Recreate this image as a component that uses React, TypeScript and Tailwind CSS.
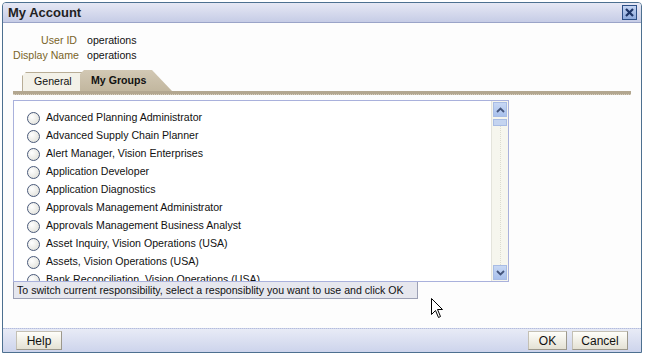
import { Fragment } from 'react';

const groups = [
  'Advanced Planning Administrator',
  'Advanced Supply Chain Planner',
  'Alert Manager, Vision Enterprises',
  'Application Developer',
  'Application Diagnostics',
  'Approvals Management Administrator',
  'Approvals Management Business Analyst',
  'Asset Inquiry, Vision Operations (USA)',
  'Assets, Vision Operations (USA)',
  'Bank Reconciliation, Vision Operations (USA)',
];

function Radio() {
  return (
    <span className="size-[13px] shrink-0 rounded-full border border-[#4a5a7a] bg-[radial-gradient(circle_at_35%_35%,#ffffff,#dcdcd4)]" />
  );
}

function Button({ label, className }: { label: string; className: string }) {
  return (
    <button
      className={`h-[19px] border border-[#c4c0b4] border-b-[#9c988c] border-r-[#9c988c] bg-gradient-to-b from-[#fefefa] to-[#e4e1d4] text-[12px] text-[#111] leading-none ${className}`}
    >
      {label}
    </button>
  );
}

function Cursor() {
  return (
    <svg className="absolute left-[431px] top-[298px]" width="13" height="22" viewBox="0 0 13 22">
      <path
        d="M0.5 0.5 L0.5 16.5 L4.5 12.5 L7.5 19.5 L9.5 18.5 L6.5 11.5 L11.5 11.5 Z"
        fill="#fff"
        stroke="#000"
        strokeWidth="1"
      />
    </svg>
  );
}

export default function App() {
  return (
    <div className="relative h-[356px] w-[645px] overflow-hidden whitespace-nowrap bg-white font-['Liberation_Sans',Arial,sans-serif]">
      <div className="ml-[2px] mt-[2px] flex h-[351px] w-[640px] flex-col rounded-t-[4px] border border-[#4d7090]">
        {/* title */}
        <div className="flex h-[20px] items-center justify-between rounded-t-[3px] border-b border-[#9aa4c8] bg-gradient-to-b from-[#e6e8f4] to-[#c6cce6] pl-[5px] pr-[4px]">
          <span className="text-[13px] font-bold text-[#222]">My Account</span>
          <span className="flex size-[15px] items-center justify-center border border-[#2c4f86] bg-gradient-to-b from-[#c4d4f2] to-[#8eaadc]">
            <svg width="9" height="9" viewBox="0 0 9 9">
              <path d="M1 1 L8 8 M8 1 L1 8" stroke="#1c3466" strokeWidth="2.2" />
            </svg>
          </span>
        </div>

        {/* body */}
        <div className="flex flex-1 flex-col bg-[#fdfdfd] px-[10px] pt-[10px] text-[10.6px]">
          <div className="grid grid-cols-[64px_auto] gap-x-[10px] leading-[15px]">
            {[
              ['User ID', 'operations'],
              ['Display Name', 'operations'],
            ].map(([k, v]) => (
              <Fragment key={k}>
                <span className="text-right text-[#7a6428]">{k}</span>
                <span className="text-[#111]">{v}</span>
              </Fragment>
            ))}
          </div>

          {/* tabs */}
          <div className="mt-[7px] flex items-end pl-[9px]">
            <div className="flex h-[19px] w-[62px] items-center border-l border-t border-[#b8ad96] bg-[#f3f1e8] pl-[11px] text-[#111] [clip-path:polygon(4px_0,100%_0,100%_100%,0_100%,0_4px)]">
              General
            </div>
            <div className="-ml-[4px] flex h-[21px] w-[92px] items-center bg-gradient-to-b from-[#d2c8b4] to-[#c2b79f] pl-[11px] font-bold text-[#111] [clip-path:polygon(4px_0,72px_0,100%_100%,0_100%,0_4px)]">
              My Groups
            </div>
          </div>
          <div className="h-[4px] w-[618px] border-b border-dotted border-[#d8d0c0] bg-[#b3a790]" />

          {/* list */}
          <div className="mt-[5px] flex h-[182px] w-[496px] border border-[#a9b1dc] bg-white">
            <div className="flex flex-1 flex-col overflow-hidden pl-[13px] pt-[8px]">
              {groups.map((g) => (
                <div key={g} className="flex h-[18px] shrink-0 items-center gap-[6px] text-[#111]">
                  <Radio />
                  <span>{g}</span>
                </div>
              ))}
            </div>
            <div className="flex w-[17px] flex-col border-l border-[#e4e4dc] bg-[#f6f6ee] p-[1px]">
              <div className="flex h-[15px] items-center justify-center border border-[#a8bce4] bg-gradient-to-b from-[#c8d8f4] to-[#a8c0ec]">
                <svg width="9" height="6" viewBox="0 0 9 6">
                  <path d="M1 5 L4.5 1.5 L8 5" fill="none" stroke="#44557c" strokeWidth="1.8" />
                </svg>
              </div>
              <div className="mt-[2px] h-[7px] border border-[#a8bce4] bg-[#c4d4f0]" />
              <div className="mx-auto w-px flex-1 border-l border-dotted border-[#dcdcd0]" />
              <div className="flex h-[15px] items-center justify-center border border-[#a8bce4] bg-gradient-to-b from-[#c8d8f4] to-[#a8c0ec]">
                <svg width="9" height="6" viewBox="0 0 9 6">
                  <path d="M1 1 L4.5 4.5 L8 1" fill="none" stroke="#44557c" strokeWidth="1.8" />
                </svg>
              </div>
            </div>
          </div>
          <div className="h-[17px] w-[405px] border border-t-0 border-[#9ca0b4] bg-[#e6e7ee] pl-[3px] leading-[16px] text-[#111]">
            To switch current responsibility, select a responsiblity you want to use and click OK
          </div>
        </div>

        {/* footer */}
        <div className="flex h-[24px] items-center justify-between border-t border-dotted border-[#b4bcdc] bg-gradient-to-b from-[#e8ebf6] to-[#cdd4ec] px-[13px]">
          <Button label="Help" className="w-[46px]" />
          <div className="flex gap-[5px]">
            <Button label="OK" className="w-[39px]" />
            <Button label="Cancel" className="w-[56px]" />
          </div>
        </div>
      </div>
      <Cursor />
    </div>
  );
}
